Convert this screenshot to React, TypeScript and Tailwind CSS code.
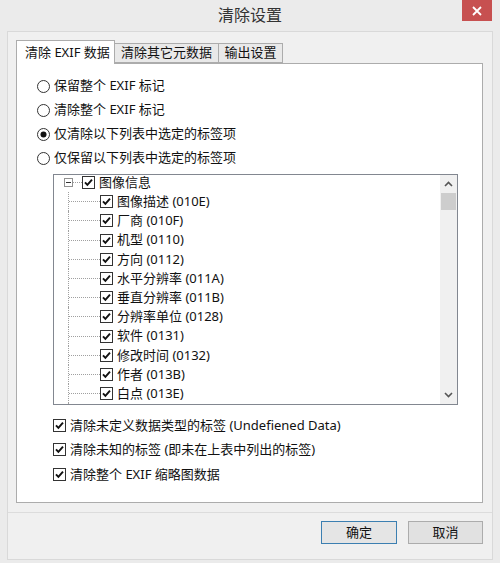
import React from "react";

const font = { fontFamily: '"Noto Sans", "Noto Sans CJK SC", sans-serif' };

const tagRows = [
  "图像描述 (010E)",
  "厂商 (010F)",
  "机型 (0110)",
  "方向 (0112)",
  "水平分辨率 (011A)",
  "垂直分辨率 (011B)",
  "分辨率单位 (0128)",
  "软件 (0131)",
  "修改时间 (0132)",
  "作者 (013B)",
  "白点 (013E)",
  "原色色度 (013F)",
];

function CheckBox() {
  return (
    <svg width="13" height="13" viewBox="0 0 13 13" className="shrink-0">
      <rect x="0.5" y="0.5" width="12" height="12" fill="#fff" stroke="#333" />
      <path d="M3 6.3 L5.4 8.9 L10 3.6" fill="none" stroke="#111" strokeWidth="1.9" />
    </svg>
  );
}

function Radio({ checked }: { checked?: boolean }) {
  return (
    <svg width="13" height="13" viewBox="0 0 13 13" className="shrink-0">
      <circle cx="6.5" cy="6.5" r="6" fill="#fff" stroke="#333" />
      {checked && <circle cx="6.5" cy="6.5" r="3" fill="#111" />}
    </svg>
  );
}

export default function App() {
  return (
    <div className="w-[500px] h-[563px] bg-[#ebebeb] flex flex-col text-[13px] text-[#111] overflow-hidden" style={font}>
      {/* title bar */}
      <div className="relative h-[31px] shrink-0 flex items-center justify-center">
        <span className="text-[16px] text-[#333] leading-none -mt-[1px]">清除设置</span>
        <div className="absolute right-[8px] top-0 w-[30px] h-[21px] bg-[#c75050] flex items-center justify-center">
          <svg width="10" height="10" viewBox="0 0 10 10">
            <path d="M1 1 L9 9 M9 1 L1 9" stroke="#fff" strokeWidth="1.8" />
          </svg>
        </div>
      </div>

      {/* client area */}
      <div className="ml-[7px] mr-[7px] mb-[3px] flex-1 bg-[#f0f0f0] border border-[#d9d9d9] flex flex-col">
        <div className="pt-[8px] px-[8px]">
          {/* tabs */}
          <div className="flex items-end h-[23px] relative z-10">
            <div className="h-[24px] w-[99px] bg-white border border-b-0 border-[#acacac] flex items-center pl-[8px] -mb-[1px]">
              清除 EXIF 数据
            </div>
            <div className="h-[20px] w-[104px] bg-[#e9e9e9] border border-l-0 border-[#acacac] flex items-center justify-center">
              清除其它元数据
            </div>
            <div className="h-[20px] w-[64px] bg-[#e9e9e9] border border-l-0 border-[#acacac] flex items-center justify-center">
              输出设置
            </div>
          </div>

          {/* tab panel */}
          <div className="h-[440px] w-[467px] bg-white border border-[#acacac] pt-[10px] pl-[20px]">
            {[
              { t: "保留整个 EXIF 标记" },
              { t: "清除整个 EXIF 标记" },
              { t: "仅清除以下列表中选定的标签项", c: true },
              { t: "仅保留以下列表中选定的标签项" },
            ].map((r) => (
              <div key={r.t} className="h-[24px] flex items-center gap-[4px]">
                <Radio checked={r.c} />
                <span>{r.t}</span>
              </div>
            ))}

            {/* tree */}
            <div className="mt-[4px] ml-[16px] w-[405px] h-[231px] border border-[#828790] flex overflow-hidden">
              <div className="flex-1 overflow-hidden">
                <div className="-mt-[2px]">
                  <div className="h-[19.2px] flex items-center pl-[10px]">
                    <div className="w-[9px] h-[9px] border border-[#919191] flex items-center justify-center shrink-0">
                      <div className="w-[5px] h-px bg-[#333]" />
                    </div>
                    <div className="w-[9px] border-t border-dotted border-[#a0a0a0]" />
                    <CheckBox />
                    <span className="ml-[4px]">图像信息</span>
                  </div>
                  <div className="ml-[14px]">
                    {tagRows.map((t) => (
                      <div key={t} className="h-[19.2px] flex items-center border-l border-dotted border-[#a0a0a0]">
                        <div className="w-[31px] border-t border-dotted border-[#a0a0a0]" />
                        <CheckBox />
                        <span className="ml-[4px]">{t}</span>
                      </div>
                    ))}
                  </div>
                </div>
              </div>
              {/* scrollbar */}
              <div className="w-[17px] bg-[#f0f0f0] flex flex-col items-center">
                <div className="h-[18px] flex items-center justify-center">
                  <svg width="9" height="6" viewBox="0 0 9 6">
                    <path d="M1 5 L4.5 1.5 L8 5" fill="none" stroke="#555" strokeWidth="1.6" />
                  </svg>
                </div>
                <div className="w-[15px] h-[17px] bg-[#cdcdcd]" />
                <div className="flex-1" />
                <div className="h-[18px] flex items-center justify-center">
                  <svg width="9" height="6" viewBox="0 0 9 6">
                    <path d="M1 1 L4.5 4.5 L8 1" fill="none" stroke="#555" strokeWidth="1.6" />
                  </svg>
                </div>
              </div>
            </div>

            {/* options */}
            <div className="mt-[8px] ml-[16px]">
              {[
                "清除未定义数据类型的标签 (Undefiened Data)",
                "清除未知的标签 (即未在上表中列出的标签)",
                "清除整个 EXIF 缩略图数据",
              ].map((t) => (
                <div key={t} className="h-[24.5px] flex items-center gap-[4px]">
                  <CheckBox />
                  <span>{t}</span>
                </div>
              ))}
            </div>
          </div>
        </div>

        {/* bottom buttons */}
        <div className="mt-[9px] border-t border-[#dcdcdc] flex-1 flex justify-end items-start pt-[8px] pr-[9px] gap-[11px]">
          <button className="w-[76px] h-[23px] border border-[#3c7fb1] bg-[#e5e5e5] flex items-center justify-center">
            确定
          </button>
          <button className="w-[75px] h-[23px] border border-[#acacac] bg-[#e1e1e1] flex items-center justify-center">
            取消
          </button>
        </div>
      </div>
    </div>
  );
}
